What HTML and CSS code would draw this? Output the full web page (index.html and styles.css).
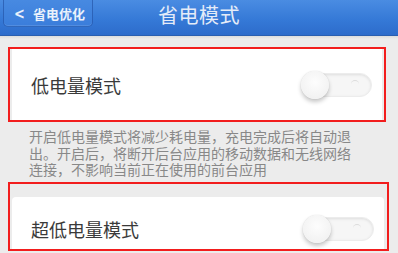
FILE: index.html
```html
<!DOCTYPE html>
<html lang="zh-CN">
<head>
<meta charset="utf-8">
<title>省电模式</title>
<link rel="stylesheet" href="styles.css">
</head>
<body>
<div class="screen">
  <header class="topbar">
    <div class="back"><span class="chev">&lt;</span><span class="back-label">省电优化</span></div>
    <div class="title">省电模式</div>
    <div></div>
  </header>
  <div class="sep"></div>
  <section class="hl hl-first">
    <div class="card">
      <span class="label">低电量模式</span>
      <span class="toggle"><span class="knob"></span><span class="mark"></span></span>
    </div>
  </section>
  <p class="desc">开启低电量模式将减少耗电量，充电完成后将自动退出。开启后，将断开后台应用的移动数据和无线网络连接，不影响当前正在使用的前台应用</p>
  <section class="hl hl-second">
    <div class="card card-second">
      <span class="label">超低电量模式</span>
      <span class="toggle"><span class="knob"></span><span class="mark"></span></span>
    </div>
  </section>
</div>
</body>
</html>
```
FILE: styles.css
```css
html, body {
  margin: 0;
  padding: 0;
  background: #ececec;
}
.screen {
  width: 398px;
  height: 253px;
  overflow: hidden;
  background: #ececec;
  font-family: "Noto Sans CJK SC", "Noto Sans", sans-serif;
}
.topbar {
  height: 36px;
  display: grid;
  grid-template-columns: 1fr auto 1fr;
  align-items: start;
  background: linear-gradient(#4a8ce2, #3478d6 60%, #2d6ccb);
  border-bottom: 1px solid #2a5fb0;
  box-sizing: border-box;
}
.back {
  justify-self: start;
  margin: -6px 0 0 3px;
  width: 90px;
  height: 33px;
  box-sizing: border-box;
  border: 1px solid rgba(20, 60, 140, 0.45);
  border-radius: 5px;
  background: linear-gradient(#4a8ce2, #3a7ddb);
  box-shadow: inset 0 -1px 0 rgba(255,255,255,0.12);
  display: flex;
  align-items: center;
  padding: 5px 0 0 10px;
  color: #eaf1fb;
  gap: 8px;
}
.chev {
  font-family: "DejaVu Sans", sans-serif;
  font-weight: bold;
  font-size: 13px;
  transform: scaleY(1.2);
}
.back-label {
  font-size: 13px;
  font-weight: bold;
}
.title {
  color: #e4ecf8;
  font-size: 20px;
  line-height: 29px;
  letter-spacing: 0.5px;
}
.sep {
  height: 11px;
  background: linear-gradient(#dcdcdc, #ececec 3px);
}
.hl {
  border: 2px solid #f21d1d;
  margin-left: 8px;
  box-sizing: border-box;
}
.hl-first {
  width: 378px;
}
.hl-second {
  width: 381px;
  padding-top: 13px;
  background: #ececec;
}
.card {
  background: #ffffff;
  height: 71px;
  display: flex;
  align-items: center;
  justify-content: space-between;
  padding: 0 10px 0 19px;
  margin-left: 2px;
  margin-right: 2px;
  box-sizing: border-box;
}
.card-second {
  height: 52px;
  margin-right: 3px;
  border-radius: 4px 4px 0 0;
  padding-top: 12px;
  align-items: center;
}
.label {
  font-size: 18px;
  color: #3a3a3a;
}
.toggle {
  position: relative;
  width: 70px;
  height: 24px;
  border-radius: 12px;
  background: #f6f6f6;
  box-shadow: inset 0 1px 3px rgba(0,0,0,0.10);
  border: 1px solid #ececec;
  box-sizing: border-box;
}
.knob {
  position: absolute;
  left: -2px;
  top: -3px;
  width: 28px;
  height: 28px;
  border-radius: 50%;
  background: radial-gradient(circle at 50% 40%, #fdfdfd, #eeeeee);
  box-shadow: 0 3px 4px rgba(0,0,0,0.22), 0 0 1px rgba(0,0,0,0.2);
}
.mark {
  position: absolute;
  right: 12px;
  top: 6px;
  width: 8px;
  height: 8px;
  border-radius: 50%;
  border-top: 1px solid #dcdcdc;
}
.desc {
  margin: 0;
  padding: 6px 0 4px 29px;
  width: 358px;
  box-sizing: border-box;
  font-size: 14px;
  line-height: 16.5px;
  color: #888888;
}
```
